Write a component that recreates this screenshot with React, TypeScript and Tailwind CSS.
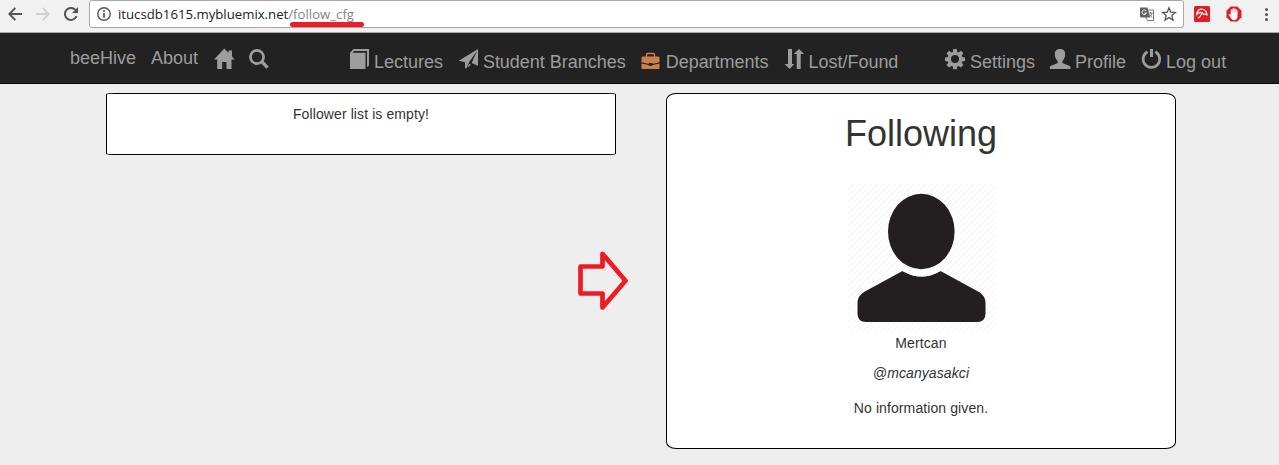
import type { ReactNode } from "react";

function Glyph({ children, className = "" }: { children: ReactNode; className?: string }) {
  return (
    <svg viewBox="0 0 20 20" className={`h-5 w-5 shrink-0 fill-current ${className}`} overflow="visible">
      {children}
    </svg>
  );
}

const HomeIcon = () => (
  <Glyph>
    <path d="M10.3-.6 14.500 3.800V1.500H18V7.500L20.800 10.500H17.500V20h-5V13H8.200v7H3.200V10.500H0L10.300-.6Z" />
  </Glyph>
);
const SearchIcon = () => (
  <Glyph>
    <circle cx="8" cy="8" r="6.6" fill="none" stroke="currentColor" strokeWidth="2.7" />
    <path d="m12.8 12.8 5.8 5.8" fill="none" stroke="currentColor" strokeWidth="3.4" />
  </Glyph>
);
const BookIcon = () => (
  <Glyph>
    <path d="M1 3.8 4.5 0H20v16.5l-2 1.8V2H5L3.6 3.7H16.5V20H1Z" />
  </Glyph>
);
const PlaneIcon = () => (
  <Glyph>
    <path d="M20 0v16.8L13.7 14 19 2 11.2 13 8.5 19.2H7v-6L.8 11.8ZM11 14.8l2 1-3.2 2.6Z" />
  </Glyph>
);
const BriefcaseIcon = () => (
  <Glyph className="text-[#cb8148]">
    <path d="M5.500 8V5.500q0-1 1-1h6q1 0 1 1V8" fill="none" stroke="currentColor" strokeWidth="1.300" />
    <path d="M1.800 7.500h15.400q1.300.3 1.300 1.500v4.300l-7 1.600v-.8H7.700v.8L.500 13.300V9q0-1.200 1.300-1.500Z" />
    <path d="m.500 14.500 7.200 1.500v.700h3.800V16l7-1.500V19q0 1-1 1h-16q-1 0-1-1Z" />
  </Glyph>
);
const SortIcon = () => (
  <Glyph>
    <path d="M4 0h4v15h2.3l-4.6 5L.5 15H4Zm8.700 20V5h-3L15 0l5 5h-3.300v15Z" />
  </Glyph>
);
const CogIcon = () => (
  <Glyph>
    <path
      fillRule="evenodd"
      d="m8.2 0h3.6l.5 2.9 1.2.5L15.9 1.8l2.5 2.5-1.7 2.4.5 1.3 2.8.4v3.5l-2.8.6-.5 1.1 1.7 2.5-2.5 2.5-2.4-1.7-1.2.5-.5 2.8H8.2l-.4-2.8-1.3-.5-2.4 1.700-2.500-2.500 1.700-2.500-.5-1.100L0 11.900V8.400L2.800 8l.5-1.300L1.600 4.300l2.500-2.500 2.400 1.600 1.300-.5ZM10 6a4 4 0 1 0 0 8 4 4 0 0 0 0-8Z"
    />
  </Glyph>
);
const UserIcon = () => (
  <Glyph>
    <path d="M10 0c3.200 0 5.200 1.700 5.200 5 0 3-1.200 5.600-2.800 7.200v1.700c2.400 1.200 5.100 1.900 7.100 2.900.8.500 1 1.600 1 3.200H-.2c0-1.600 0-2.700.9-3.200 2-1.100 4.900-1.700 7-2.900v-1.700C6 10.700 4.800 8 4.800 5 4.800 1.700 6.900 0 10 0Z" />
  </Glyph>
);
const PowerIcon = () => (
  <Glyph>
    <path d="M6.500 2.700a8.300 8.300 0 1 0 7.800 0" fill="none" stroke="currentColor" strokeWidth="2.700" />
    <path d="M9 0h3v8H9Z" />
  </Glyph>
);

function NavItem({ icon, label }: { icon: ReactNode; label: string }) {
  return (
    <a className="flex items-start gap-[5px] whitespace-nowrap">
      {icon}
      <span className="mt-[3px] leading-5">{label}</span>
    </a>
  );
}

function BrowserBar() {
  return (
    <header className="flex h-[33px] items-start border-b border-[#a8a8a8] bg-[#f1f1f1]">
      <div className="flex h-7 w-[89px] items-center gap-[14px] pl-[8px]">
        <svg viewBox="0 0 14 14" className="h-[14px] w-[14px] shrink-0" fill="none" stroke="#555" strokeWidth="1.900">
          <path d="M14 7H1.500M7.300.900 1.300 7l6 6.100" />
        </svg>
        <svg viewBox="0 0 14 14" className="h-[14px] w-[14px] shrink-0" fill="none" stroke="#d0d0d0" strokeWidth="1.900">
          <path d="M0 7h12.500M6.700.900l6 6.100-6 6.100" />
        </svg>
        <svg viewBox="0 0 14 14" className="h-[14px] w-[14px] shrink-0" fill="none">
          <path d="M12.500 9.200A6 6 0 1 1 11.400 2.900" stroke="#555" strokeWidth="2" />
          <path d="M14 0v6H8Z" fill="#555" />
        </svg>
      </div>
      <div className="relative flex h-7 w-[1095px] items-center rounded-[3px] border border-[#a8a8a8] bg-white pl-[7px]">
        <svg viewBox="0 0 14 14" className="h-[14px] w-[14px] shrink-0" fill="none">
          <circle cx="7" cy="7" r="6.200" stroke="#555" strokeWidth="1.400" />
          <path d="M7 6v4.700M7 3.200v1.700" stroke="#555" strokeWidth="1.700" />
        </svg>
        <svg className="ml-[7px] h-6 w-60 shrink-0" overflow="visible">
          <text x="0" y="16.500" textLength="236" lengthAdjust="spacingAndGlyphs" fontFamily="'Open Sans','Noto Sans',sans-serif" fontSize="13" fill="#222">
            itucsdb1615.mybluemix.net<tspan fill="#858585">/follow_cfg</tspan>
          </text>
        </svg>
        <div className="absolute left-[200px] top-[21px] h-[5px] w-[74px] rounded-full bg-[#ed1c24]" />
        <svg viewBox="0 0 14 14" className="ml-auto h-[14px] w-[14px]">
          <path d="M5 3h8.500v10.500H7.500L5 9Z" fill="#fff" stroke="#777" />
          <path d="M0 .500h7.500L10 10.500H1.500Q0 10.500 0 9Z" fill="#606060" />
          <path d="M6.300 4A2.300 2.300 0 1 0 6.500 6H4.500" fill="none" stroke="#fff" />
          <path d="M8.500 6h4M10.500 5v1M12 6c-.4 2-1.500 3.300-3 4M9 7.500l3 3" fill="none" stroke="#777" />
        </svg>
        <svg viewBox="0 0 14 14" className="ml-2 mr-[7px] h-[14px] w-[14px]" overflow="visible">
          <path d="m7 .800 1.700 4.300 4.700.400-3.600 3 1.200 4.600L7 10.600l-4 2.500 1.200-4.600-3.600-3 4.700-.4Z" fill="none" stroke="#555" strokeWidth="1.300" />
        </svg>
      </div>
      <svg viewBox="0 0 16 16" className="ml-[10px] mt-[6px] h-4 w-4" overflow="visible">
        <rect width="16" height="16" rx="1.500" fill="#e31b23" />
        <path d="M2.900 8.400C2.800 4.600 6 2.200 9.300 3.500c2.200.9 3.600 2.900 3.600 5.400-1-.9-2-1-2.900-.3C8.700 6.900 6.700 6 5.300 6.900 4.200 7 3.400 7.500 2.900 8.400Z" fill="none" stroke="#fff" strokeWidth="1.200" />
        <path d="M8.300 7 5.700 11q-.9 1-1.700.2" fill="none" stroke="#fff" strokeWidth="1.200" />
      </svg>
      <svg viewBox="0 0 16 16" className="ml-4 mt-[6px] h-4 w-4">
        <path d="M4.700.500h6.600l4.200 4.200v6.600l-4.200 4.200H4.700L.500 11.300V4.700Z" fill="#e31b23" />
        <path d="M5 12 2.800 8.500q.8-1 2.200.5V4q.6-1 1.200 0v3h.4V2.800q.7-1 1.300 0V7h.4V3q.7-1 1.300 0v4h.4V4.200q.7-1 1.300 0V11q-.4 3-3.300 3Q6 14 5 12Z" fill="#fff" stroke="#fff" strokeWidth=".4" />
      </svg>
      <svg viewBox="0 0 4 14" className="ml-[22px] mt-2 h-[14px] w-1 fill-[#555]">
        <circle cx="2.500" cy="1.600" r="1.500" />
        <circle cx="2.500" cy="6.500" r="1.500" />
        <circle cx="2.500" cy="11.500" r="1.500" />
      </svg>
    </header>
  );
}

function Navbar() {
  return (
    <nav className="flex h-[51px] items-start border-b border-[#080808] bg-[#222] text-[18px] text-[#9d9d9d]">
      <div className="ml-[70px] flex w-[279px] gap-[15px] pt-[15px] leading-5">
        <a>beeHive</a>
        <a>About</a>
        <div className="ml-px mt-px flex gap-[15px]">
          <HomeIcon />
          <SearchIcon />
        </div>
      </div>
      <div className="flex w-[596px] gap-[15px] pt-4 tracking-[-0.02px]">
        <NavItem icon={<BookIcon />} label="Lectures" />
        <NavItem icon={<PlaneIcon />} label="Student Branches" />
        <NavItem icon={<BriefcaseIcon />} label="Departments" />
        <NavItem icon={<SortIcon />} label="Lost/Found" />
      </div>
      <div className="flex gap-[15px] pt-4">
        <NavItem icon={<CogIcon />} label="Settings" />
        <NavItem icon={<UserIcon />} label="Profile" />
        <NavItem icon={<PowerIcon />} label="Log out" />
      </div>
    </nav>
  );
}

function Avatar() {
  return (
    <svg viewBox="0 0 148 148" className="ml-px mt-[30px] block h-[148px] w-[148px]">
      <defs>
        <pattern id="hatch" width="6" height="6" patternUnits="userSpaceOnUse">
          <path d="M-1 7 7-1M-1 1l2-2M5 7l2-2" stroke="#f3f3f3" strokeWidth="1" />
        </pattern>
      </defs>
      <rect width="148" height="148" fill="url(#hatch)" />
      <path d="M54.500 87Q73.500 98 92.500 87L131 108Q137.500 112 137.500 119V129.500Q137.500 138 129 138H18Q9.500 138 9.500 129.500V119Q9.500 112 16 108Z" fill="#231f20" />
      <path d="M54.500 87Q73.500 98 92.500 87L86 81H61Z" fill="#fff" />
      <ellipse cx="73.300" cy="47.500" rx="33.300" ry="37.700" fill="#231f20" />
    </svg>
  );
}

export default function App() {
  return (
    <div className="h-[465px] w-[1279px] overflow-hidden bg-[#eee] font-['Liberation_Sans',Arial,sans-serif] text-sm leading-5 text-[#333]">
      <BrowserBar />
      <Navbar />
      <main className="relative flex items-start gap-[50px] pl-[106px] pt-[9px]">
        <section className="h-[62px] w-[510px] rounded-[2%] border border-black bg-white pt-[10px] text-center tracking-[0.1px]">
          Follower list is empty!
        </section>
        <section className="flex h-[356px] w-[510px] flex-col items-center rounded-[2%] border border-black bg-white pt-5">
          <h1 className="text-[36px] font-normal leading-10">Following</h1>
          <Avatar />
          <p className="mt-px tracking-[0.1px]">Mertcan</p>
          <p className="mt-[10px] italic tracking-[0.1px]">@mcanyasakci</p>
          <p className="mt-[15px] tracking-[0.1px]">No information given.</p>
        </section>
        <svg viewBox="0 0 52 60" className="absolute left-[577px] top-[167px] h-[60px] w-[52px]">
          <path d="M3.500 15.500H25.500V2.800L48.500 29.800 25.500 56.500V42.500H3.500Z" fill="none" stroke="#ed1c24" strokeWidth="4.700" strokeLinejoin="round" />
        </svg>
      </main>
    </div>
  );
}
